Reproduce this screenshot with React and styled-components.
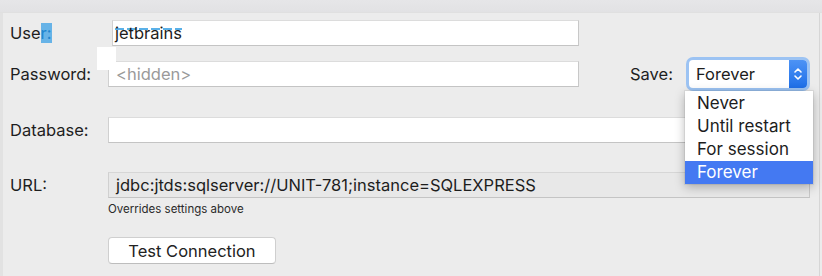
import React from 'react'
import styled, { createGlobalStyle } from 'styled-components'

const GlobalStyle = createGlobalStyle`
  html, body {
    margin: 0;
    padding: 0;
    background: #ececec;
    font-family: Inter, "Noto Sans", "Liberation Sans", sans-serif;
    -webkit-font-smoothing: antialiased;
  }
`

const Window = styled.div`
  width: 822px;
  height: 276px;
  display: flex;
  flex-direction: column;
  background: #ececec;
  overflow: hidden;
  position: relative;
`

const TopStrip = styled.div`
  height: 12px;
  background: linear-gradient(#e6e6e8, #e2e2e4);
  border-bottom: 1px solid #e0e0e0;
`

const Panel = styled.div`
  flex: 1;
  width: 809px;
  border-left: 3px solid #e2e2e2;
  border-right: 1px solid #d6d6d6;
  display: flex;
  flex-direction: column;
  padding: 7px 0 0 7px;
  color: #1d1d1d;
`

const Row = styled.div`
  display: flex;
  align-items: center;
  height: 26px;
  margin-top: ${p => p.$gap || 0}px;
`

const Label = styled.label`
  width: 98px;
  font-size: 16.5px;
  color: #1e1e1e;
`

const Marked = styled.span`
  color: #1f86cf;
  background: rgba(70, 165, 230, 0.8);
`

const TextField = styled.div`
  box-sizing: border-box;
  height: 26px;
  width: ${p => p.$width}px;
  margin-left: ${p => p.$shift || 0}px;
  background: ${p => (p.$disabled ? '#e8e8e8' : '#ffffff')};
  border: 1px solid #d0d0d0;
  border-top-color: ${p => (p.$disabled ? '#d6d6d6' : '#dcdcdc')};
  border-bottom-color: #c4c4c4;
  border-right-color: #c8c8c8;
  padding-left: ${p => (p.$shift ? 2 : 7)}px;
  display: flex;
  align-items: center;
  font-size: 16.5px;
  color: ${p => (p.$placeholder ? '#9a9a9a' : '#1d1d1d')};
  white-space: nowrap;
`

const Dashed = styled.span`
  background-image: repeating-linear-gradient(90deg, rgba(61, 163, 228, 0.85) 0 9px, transparent 9px 12px);
  background-repeat: no-repeat;
  background-size: 100% 2px;
  background-position: 0 5px;
`

const SaveLabel = styled.span`
  margin-left: 51px;
  width: 56px;
  font-size: 16.5px;
  color: #1e1e1e;
`

const SelectRing = styled.div`
  box-sizing: border-box;
  width: 124px;
  height: 34px;
  padding: 3px;
  border-radius: 7px;
  background: #9cc3f3;
  display: flex;
`

const SelectBox = styled.div`
  flex: 1;
  display: flex;
  border-radius: 4px;
  overflow: hidden;
  background: #fff;
`

const SelectValue = styled.span`
  flex: 1;
  padding-left: 7px;
  display: flex;
  align-items: center;
  font-size: 16.5px;
  color: #1d1d1d;
`

const Stepper = styled.span`
  width: 18px;
  background: linear-gradient(#4d93f5, #1e6fe8);
  display: flex;
  align-items: center;
  justify-content: center;
`

const Note = styled.div`
  margin: 4px 0 0 98px;
  font-size: 11.5px;
  color: #2a2a2a;
`

const Button = styled.button`
  box-sizing: border-box;
  margin: 21px 0 0 98px;
  width: 168px;
  height: 27px;
  background: #ffffff;
  border: 1px solid #cfcfcf;
  border-bottom-color: #bdbdbd;
  border-radius: 4px;
  font-family: inherit;
  font-size: 16.5px;
  color: #222;
  padding: 0;
`

const Menu = styled.ul`
  position: absolute;
  left: 685px;
  top: 91px;
  width: 128px;
  margin: 0;
  padding: 1px 0 0;
  list-style: none;
  background: #ffffff;
  box-shadow: 0 3px 10px rgba(0, 0, 0, 0.28), 0 0 0 1px rgba(0, 0, 0, 0.06);
`

const MenuItem = styled.li`
  height: 23px;
  line-height: 23px;
  padding-left: 12px;
  font-size: 17px;
  color: ${p => (p.$active ? '#ffffff' : '#1d1d1d')};
  background: ${p => (p.$active ? '#4479f2' : 'transparent')};
`

const Smudge = styled.div`
  position: absolute;
  left: 97px;
  top: 47px;
  width: 19px;
  height: 23px;
  background: #ffffff;
`

const options = ['Never', 'Until restart', 'For session', 'Forever']

export default function App() {
  return (
    <Window>
      <GlobalStyle />
      <TopStrip />
      <Panel>
        <Row>
          <Label>Use<Marked>r:</Marked></Label>
          <TextField $width={467} $shift={4}>
            <Dashed>jetbrains</Dashed>
          </TextField>
        </Row>
        <Row $gap={15}>
          <Label>Password:</Label>
          <TextField $width={471} $placeholder>&lt;hidden&gt;</TextField>
          <SaveLabel>Save:</SaveLabel>
          <SelectRing>
            <SelectBox>
              <SelectValue>Forever</SelectValue>
              <Stepper>
                <svg width="10" height="16" viewBox="0 0 10 16" fill="none" stroke="#fff" strokeWidth="1.6" strokeLinecap="round" strokeLinejoin="round">
                  <path d="M2 6 L5 3 L8 6" />
                  <path d="M2 10 L5 13 L8 10" />
                </svg>
              </Stepper>
            </SelectBox>
          </SelectRing>
        </Row>
        <Row $gap={30}>
          <Label>Database:</Label>
          <TextField $width={702} />
        </Row>
        <Row $gap={29}>
          <Label>URL:</Label>
          <TextField $width={702} $disabled>jdbc:jtds:sqlserver://UNIT-781;instance=SQLEXPRESS</TextField>
        </Row>
        <Note>Overrides settings above</Note>
        <Button>Test Connection</Button>
      </Panel>
      <Smudge />
      <Menu>
        {options.map(o => (
          <MenuItem key={o} $active={o === 'Forever'}>{o}</MenuItem>
        ))}
      </Menu>
    </Window>
  )
}
